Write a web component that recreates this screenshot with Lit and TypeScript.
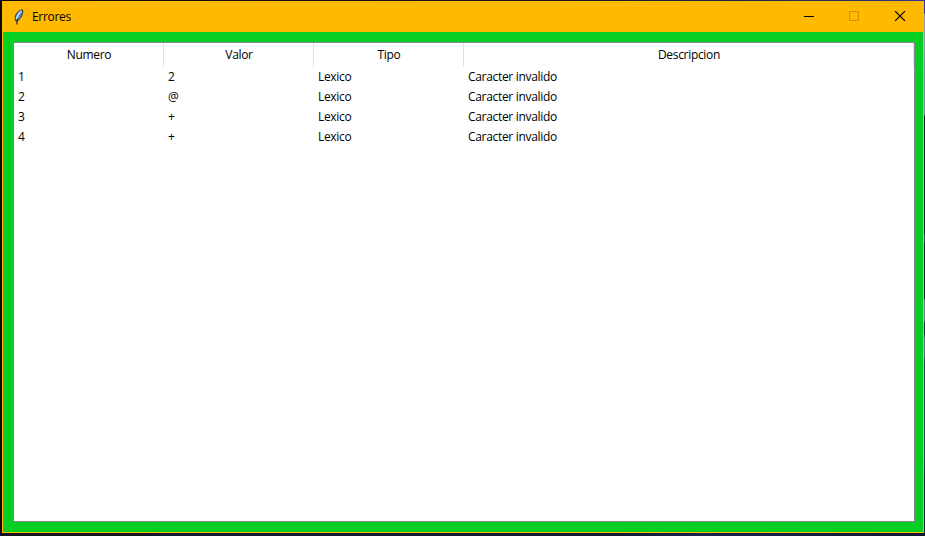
import { LitElement, html, css, svg } from "lit";
import { customElement, property } from "lit/decorators.js";

interface ErrorRow {
  numero: string;
  valor: string;
  tipo: string;
  descripcion: string;
}

const ROWS: ErrorRow[] = [
  { numero: "1", valor: "2", tipo: "Lexico", descripcion: "Caracter invalido" },
  { numero: "2", valor: "@", tipo: "Lexico", descripcion: "Caracter invalido" },
  { numero: "3", valor: "+", tipo: "Lexico", descripcion: "Caracter invalido" },
  { numero: "4", valor: "+", tipo: "Lexico", descripcion: "Caracter invalido" },
];

const minimizeGlyph = svg`<path d="M5 5.5H15" stroke="#000"/>`;
const maximizeGlyph = svg`<rect x="5.5" y="0.5" width="9" height="9" stroke="#cc9302"/>`;
const closeGlyph = svg`<path d="M5.5 0.5L14.5 9.5M14.5 0.5L5.5 9.5" stroke="#000" stroke-width="1.1" stroke-linecap="square"/>`;

@customElement("title-bar")
export class TitleBar extends LitElement {
  @property() caption = "";

  static styles = css`
    :host {
      display: flex;
      align-items: center;
      height: 31px;
      background: #ffb900;
      color: #000;
    }
    .feather {
      width: 16px;
      height: 16px;
      margin-left: 8px;
      flex: none;
    }
    .caption {
      flex: 1;
      margin-left: 6px;
      line-height: 17px;
    }
    .controls {
      display: flex;
      margin-right: 1px;
    }
    .control {
      display: flex;
      align-items: center;
      justify-content: center;
      width: 46px;
      height: 31px;
      padding: 0;
      border: 0;
      background: none;
    }
    .control svg {
      width: 20px;
      height: 11px;
    }
    .control:first-child {
      width: 45px;
    }
  `;

  render() {
    return html`
      <svg class="feather" viewBox="0 0 16 16">
        <path d="M12.3 0.7C9 1.3 5.6 4.2 5.2 8.4L5.3 11.6L7.2 12L10 9.6L11.9 6.4L12.8 2.6Z" fill="#4f86c6" stroke="#141c2b" stroke-width="0.8"/>
        <path d="M11.4 2C9.2 3.8 7.3 6.3 6.5 10.4" stroke="#b5d6f5" stroke-width="1.7" fill="none"/>
        <path d="M8.1 9.6C7.4 11 7 12 6.9 13V15.6" stroke="#17191f" stroke-width="1.1" fill="none"/>
      </svg>
      <span class="caption">${this.caption}</span>
      <div class="controls">
        ${[minimizeGlyph, maximizeGlyph, closeGlyph].map(
          (glyph) => html`<button class="control">
            <svg viewBox="0 0 20 11" fill="none">${glyph}</svg>
          </button>`
        )}
      </div>
    `;
  }
}

@customElement("error-table")
export class ErrorTable extends LitElement {
  @property({ attribute: false }) rows: ErrorRow[] = [];

  static styles = css`
    :host {
      display: block;
      box-sizing: border-box;
      border: 1px solid #828790;
      background: #fff;
      color: #000;
    }
    .row {
      display: grid;
      grid-template-columns: 150px 150px 150px 1fr;
      height: 20px;
      line-height: 20px;
    }
    .head {
      height: 24px;
      line-height: 24px;
      text-align: center;
    }
    .head span {
      border-right: 1px solid #e0e0e0;
      padding-left: 1px;
    }
    .body span {
      padding-left: 4px;
    }
  `;

  render() {
    return html`
      <div class="row head">
        <span>Numero</span><span>Valor</span><span>Tipo</span><span>Descripcion</span>
      </div>
      ${this.rows.map(
        (r) => html`<div class="row body">
          <span>${r.numero}</span><span>${r.valor}</span><span>${r.tipo}</span><span>${r.descripcion}</span>
        </div>`
      )}
    `;
  }
}

@customElement("app-root")
export class AppRoot extends LitElement {
  static styles = css`
    :host {
      display: block;
      box-sizing: border-box;
      width: 925px;
      height: 536px;
      padding: 1px 1px 3px 2px;
      font: 12px "Open Sans", "Noto Sans", sans-serif;
      letter-spacing: -0.32px;
      background:
        linear-gradient(#2a35a8 0 13px, #8b9aa6 14px 45px, #6e8799 70px 114px, #10182e 117px 232px, #3a4b62 236px 240px, #10182e 246px 298px, #647b8e 300px 320px, #1a2740 324px 334px, #526c80 338px 356px, #24415e 362px 460px, #101a38 480px) right / 1px 100% no-repeat,
        linear-gradient(90deg, #14131c 0 130px, #111832 170px 610px, #16234d 700px, #121634) bottom / 100% 3px no-repeat,
        linear-gradient(90deg, #0a0710, #191722 60%, #292c50 90%, #2a35a8) top / 100% 1px no-repeat,
        #08060f;
    }
    .window {
      display: flex;
      flex-direction: column;
      height: 532px;
    }
    .client {
      flex: 1;
      box-sizing: border-box;
      display: flex;
      padding: 10px 8px 10px 10px;
      border: 1px solid #ffb900;
      border-top: 0;
      background: #06ce22;
    }
    error-table {
      flex: 1;
    }
  `;

  render() {
    return html`
      <div class="window">
        <title-bar caption="Errores"></title-bar>
        <div class="client"><error-table .rows=${ROWS}></error-table></div>
      </div>
    `;
  }
}
